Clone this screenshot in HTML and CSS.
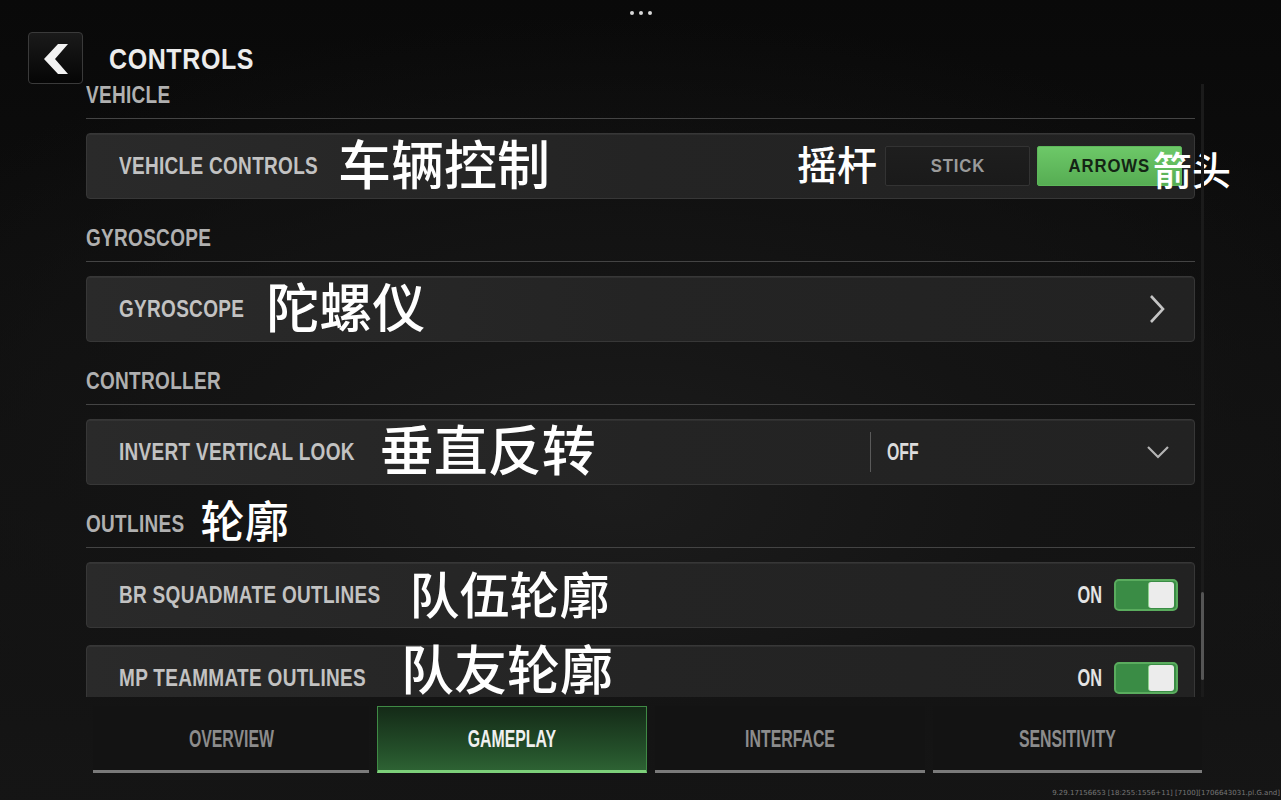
FILE: index.html
```html
<!DOCTYPE html>
<html lang="zh-CN">
<head>
<meta charset="utf-8">
<title>Controls</title>
<link rel="stylesheet" href="styles.css">
</head>
<body>
<div class="screen">
  <div class="dots"><span></span><span></span><span></span></div>

  <header class="topbar">
    <button class="back" aria-label="Back">
      <svg width="55" height="52" viewBox="0 0 55 52"><polygon points="30,12 40,12 27,27 40,42 30,42 16,27" fill="#f2f2f2"/></svg>
    </button>
    <h1 class="title"><span>CONTROLS</span></h1>
  </header>

  <main class="content">
    <div class="list">
      <section class="section">
        <h2 class="sec-head"><span class="en">VEHICLE</span></h2>
        <div class="row">
          <span class="label">VEHICLE CONTROLS</span>
          <span class="zh zh-row zh-vehicle">车辆控制</span>
          <span class="spacer"></span>
          <span class="zh zh-small zh-stick">摇杆</span>
          <div class="segmented">
            <span class="seg"><span>STICK</span></span>
            <span class="seg seg-on"><span>ARROWS</span></span>
            <span class="zh zh-small zh-over">箭头</span>
          </div>
        </div>
      </section>

      <section class="section">
        <h2 class="sec-head"><span class="en">GYROSCOPE</span></h2>
        <div class="row row-link">
          <span class="label">GYROSCOPE</span>
          <span class="zh zh-row zh-gyro">陀螺仪</span>
          <span class="spacer"></span>
          <svg class="chev-right" width="18" height="30" viewBox="0 0 18 30"><polyline points="3,2 15,15 3,28" fill="none" stroke="#c4c4c4" stroke-width="2.6"/></svg>
        </div>
      </section>

      <section class="section">
        <h2 class="sec-head"><span class="en">CONTROLLER</span></h2>
        <div class="row row-select">
          <span class="label">INVERT VERTICAL LOOK</span>
          <span class="zh zh-row zh-invert">垂直反转</span>
          <span class="spacer"></span>
          <div class="select">
            <span class="value"><span>OFF</span></span>
            <svg class="chev-down" width="24" height="14" viewBox="0 0 24 14"><polyline points="2,2 12,12 22,2" fill="none" stroke="#b4b4b4" stroke-width="2.2"/></svg>
          </div>
        </div>
      </section>

      <section class="section">
        <h2 class="sec-head"><span class="en">OUTLINES</span><span class="zh zh-head">轮廓</span></h2>
        <div class="row row-toggle">
          <span class="label">BR SQUADMATE OUTLINES</span>
          <span class="zh zh-row zh-squad">队伍轮廓</span>
          <span class="spacer"></span>
          <span class="state"><span>ON</span></span>
          <span class="toggle"><span class="knob"></span></span>
        </div>
        <div class="row row-toggle">
          <span class="label">MP TEAMMATE OUTLINES</span>
          <span class="zh zh-row zh-team">队友轮廓</span>
          <span class="spacer"></span>
          <span class="state"><span>ON</span></span>
          <span class="toggle"><span class="knob"></span></span>
        </div>
      </section>
    </div>
    <div class="scrolltrack"><div class="thumb"></div></div>
  </main>

  <nav class="tabs">
    <a class="tab"><span>OVERVIEW</span></a>
    <a class="tab tab-active"><span>GAMEPLAY</span></a>
    <a class="tab"><span>INTERFACE</span></a>
    <a class="tab"><span>SENSITIVITY</span></a>
  </nav>

  <footer class="build">9.29.17156653 [18:255:1556+11] [7100][1706643031.pl.G.and]</footer>
</div>
</body>
</html>
```

FILE: styles.css
```css
* { box-sizing: border-box; }

html, body {
  margin: 0;
  padding: 0;
  width: 1281px;
  height: 800px;
  overflow: hidden;
  background: #0c0c0c;
}

.screen {
  position: relative;
  width: 1281px;
  height: 800px;
  overflow: hidden;
  display: flex;
  flex-direction: column;
  font-family: "Liberation Sans", "DejaVu Sans", sans-serif;
  font-weight: 700;
  background:
    radial-gradient(ellipse 70% 60% at 48% 62%, #1c1c1c 0%, #141414 45%, rgba(12,12,12,0) 100%),
    linear-gradient(180deg, #090909 0%, #0f0f0f 45%, #151515 100%);
}

/* status dots */
.dots {
  position: absolute;
  top: 11px;
  left: 630px;
  display: flex;
  gap: 5px;
}
.dots span {
  width: 4px;
  height: 4px;
  border-radius: 50%;
  background: #d8d8d8;
}

/* header */
.topbar {
  height: 78px;
  flex: none;
  display: flex;
  align-items: flex-start;
  padding: 32px 0 0 28px;
}
.back {
  position: relative;
  z-index: 1;
  width: 55px;
  height: 52px;
  padding: 0;
  margin: 0;
  border: 1px solid #3a3a3a;
  border-radius: 4px;
  background: linear-gradient(180deg, #1a1a1a 0%, #050505 100%);
  display: flex;
  align-items: center;
  justify-content: center;
}
.back svg { display: block; margin: -1px; }
.title {
  margin: 14px 0 0 26px;
  font-size: 25px;
  line-height: 24px;
  letter-spacing: 0.6px;
  color: #ececec;
  font-weight: 700;
}
.title span {
  display: inline-block;
  transform: scaleY(1.2);
}

/* content list */
.content {
  flex: none;
  height: 619px;
  display: flex;
  padding: 6px 0 0 86px;
  overflow: hidden;
}
.list {
  width: 1109px;
  flex: none;
}
.section + .section { margin-top: 28px; }

.sec-head {
  margin: 0 0 14px 0;
  height: 35px;
  padding-bottom: 12px;
  border-bottom: 1px solid #444;
  display: flex;
  align-items: center;
  font-size: 19px;
  font-weight: 700;
  line-height: 20px;
  color: #b0b0b0;
  letter-spacing: 0.3px;
}
.sec-head .en {
  display: inline-block;
  transform: scaleY(1.25);
}

.row {
  height: 66px;
  display: flex;
  align-items: center;
  padding: 0 12px 0 32px;
  border: 1px solid #373737;
  border-radius: 4px;
  background: linear-gradient(90deg, #2a2a2a 0%, #242424 50%, #222 100%);
  box-shadow: inset 0 1px 0 rgba(255,255,255,0.05);
}
.row + .row { margin-top: 17px; }

.label {
  display: inline-block;
  font-size: 19px;
  color: #c2c2c2;
  letter-spacing: 0.3px;
  white-space: nowrap;
  transform: scaleY(1.25);
}
.spacer { flex: 1; }

.zh {
  font-family: "Noto Sans CJK SC", "Noto Sans CJK JP", sans-serif;
  font-weight: 500;
  color: #ffffff;
  line-height: 1;
  white-space: nowrap;
}
.zh-row { font-size: 53px; margin-top: -8px; }
.zh-vehicle { margin-left: 20px; }
.zh-gyro { margin-left: 22px; }
.zh-invert { margin-left: 25px; font-size: 54px; }
.zh-squad { font-size: 50px; margin-left: 29px; margin-top: -6px; }
.zh-team { margin-left: 35px; margin-top: -22px; }
.zh-small { font-size: 40px; }
.zh-stick { margin-top: -6px; }
.zh-head { font-size: 44px; margin-left: 16px; margin-top: -10px; }

/* segmented control */
.segmented {
  position: relative;
  display: flex;
  gap: 7px;
  margin-left: 8px;
}
.seg {
  width: 145px;
  height: 40px;
  display: flex;
  align-items: center;
  justify-content: center;
  font-size: 19px;
  letter-spacing: 1px;
  color: #9a9a9a;
  border: 1px solid #333;
  border-radius: 2px;
  background: linear-gradient(180deg, #1e1e1e, #1a1a1a);
}
.seg span {
  display: inline-block;
  transform: scaleX(0.88);
}
.seg-on {
  color: #142414;
  border-color: #5db85a;
  background: linear-gradient(180deg, #6dc868 0%, #56ad53 100%);
}
.zh-over {
  position: absolute;
  left: 268px;
  top: 3px;
  font-size: 39px;
}

/* link row */
.row-link { padding-right: 28px; }

/* select row */
.row-select { padding-right: 24px; }
.select {
  width: 300px;
  height: 40px;
  display: flex;
  align-items: center;
  border-left: 1px solid #5a5a5a;
  padding-left: 16px;
}
.select .value {
  font-size: 24px;
  color: #dcdcdc;
  flex: 1;
}
.select .value span {
  display: inline-block;
  transform: scaleX(0.66);
  transform-origin: left center;
}

/* toggle row */
.row-toggle { padding-right: 16px; }
.state {
  font-size: 24px;
  color: #e4e4e4;
  margin-right: 12px;
}
.state span {
  display: inline-block;
  transform: scaleX(0.68);
  transform-origin: right center;
}
.toggle {
  width: 64px;
  height: 32px;
  border: 2px solid #5aac5e;
  border-radius: 5px;
  background: #3a8c45;
  display: flex;
  justify-content: flex-end;
  align-items: center;
  padding-right: 2px;
}
.knob {
  width: 26px;
  height: 26px;
  border-radius: 3px;
  background: #ececec;
  border-left: 1px solid #8fd08f;
}

/* scrollbar */
.scrolltrack {
  width: 3px;
  margin-left: 6px;
  background: #1b1b1b;
  position: relative;
}
.thumb {
  position: absolute;
  left: 0;
  top: 508px;
  width: 3px;
  height: 88px;
  background: #555;
  border-radius: 2px;
}

/* tabs */
.tabs {
  flex: none;
  display: grid;
  grid-template-columns: 276px 270px 270px 269px;
  gap: 8px;
  margin-left: 93px;
  width: 1110px;
  padding-top: 9px;
}
.tab {
  height: 67px;
  display: flex;
  align-items: center;
  justify-content: center;
  background: #131313;
  border-bottom: 3px solid #7a7a7a;
  color: #8c8c8c;
  font-size: 24px;
}
.tab span {
  display: inline-block;
  transform: scaleX(0.66);
  margin-top: 1px;
}
.tab-active {
  color: #f0f0f0;
  border: 1px solid #3f8a45;
  border-bottom: 3px solid #7dd07a;
  background: linear-gradient(180deg, #142a17 0%, #24502a 70%, #2d6233 100%);
}

/* build string */
.build {
  flex: none;
  margin-top: auto;
  align-self: flex-end;
  padding: 0 1px 2px 0;
  font-family: "DejaVu Sans", sans-serif;
  font-weight: 400;
  font-size: 7px;
  line-height: 10px;
  color: #777;
  white-space: nowrap;
}
```
